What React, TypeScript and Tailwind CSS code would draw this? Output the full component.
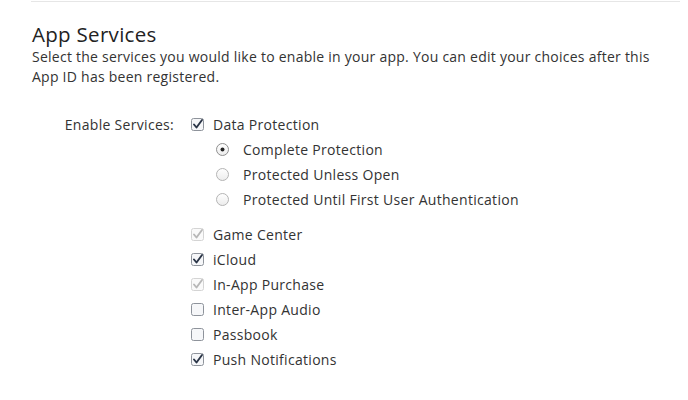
import React from "react";

function Check({ checked, disabled }: { checked?: boolean; disabled?: boolean }) {
  return (
    <svg width="13" height="13" viewBox="0 0 13 13" className="shrink-0">
      <rect x="0.5" y="0.5" width="12" height="12" rx="2" fill={disabled ? "#fafafa" : "#f6f7f9"} stroke={disabled ? "#d4d4d4" : "#8e939b"} />
      {checked && (
        <path d="M3 6.5 L5.5 9.5 L11 2" fill="none" stroke={disabled ? "#b8b8b8" : "#2a3547"} strokeWidth="1.9" strokeLinecap="round" strokeLinejoin="round" />
      )}
    </svg>
  );
}

function Radio({ checked }: { checked?: boolean }) {
  return (
    <svg width="13" height="13" viewBox="0 0 13 13" className="shrink-0">
      <defs>
        <linearGradient id="rg" x1="0" y1="0" x2="0" y2="1">
          <stop offset="0" stopColor="#ffffff" />
          <stop offset="1" stopColor="#ececec" />
        </linearGradient>
      </defs>
      <circle cx="6.5" cy="6.5" r="6" fill="url(#rg)" stroke={checked ? "#8f8f8f" : "#b4b4b4"} />
      {checked && <circle cx="6.5" cy="6.5" r="2" fill="#222" />}
    </svg>
  );
}

const services = [
  { name: "Game Center", checked: true, disabled: true },
  { name: "iCloud", checked: true },
  { name: "In-App Purchase", checked: true, disabled: true },
  { name: "Inter-App Audio" },
  { name: "Passbook" },
  { name: "Push Notifications", checked: true },
];

export default function App() {
  return (
    <div className="w-[688px] h-[400px] bg-white text-[#333] font-['Open_Sans',sans-serif] overflow-hidden">
      <div className="ml-[31px] mr-[8px] border-t border-[#e6e6e6] mt-[1px]" />
      <div className="pl-[32px] pt-[20px]">
        <h2 className="text-[20.5px] leading-[24px] tracking-[0.3px] text-[#222]">App Services</h2>
        <p className="text-[14px] leading-[20px] tracking-[0.25px] w-[626px] mt-[1px]">
          Select the services you would like to enable in your app. You can edit your choices after this App ID has been registered.
        </p>
      </div>
      <div className="flex mt-[25px] text-[14px] leading-[25px] tracking-[0.3px]">
        <div className="w-[174px] text-right">Enable Services:</div>
        <div className="ml-[17px] flex flex-col">
          <label className="flex items-center gap-[9px] h-[25px]">
            <Check checked />
            <span>Data Protection</span>
          </label>
          <div className="pl-[25px] flex flex-col">
            <label className="flex items-center gap-[14px] h-[25px]">
              <Radio checked />
              <span>Complete Protection</span>
            </label>
            <label className="flex items-center gap-[14px] h-[25px]">
              <Radio />
              <span>Protected Unless Open</span>
            </label>
            <label className="flex items-center gap-[14px] h-[25px]">
              <Radio />
              <span>Protected Until First User Authentication</span>
            </label>
          </div>
          <div className="flex flex-col mt-[10px]">
            {services.map((s) => (
              <label key={s.name} className="flex items-center gap-[9px] h-[25px]">
                <Check checked={s.checked} disabled={s.disabled} />
                <span>{s.name}</span>
              </label>
            ))}
          </div>
        </div>
      </div>
    </div>
  );
}
